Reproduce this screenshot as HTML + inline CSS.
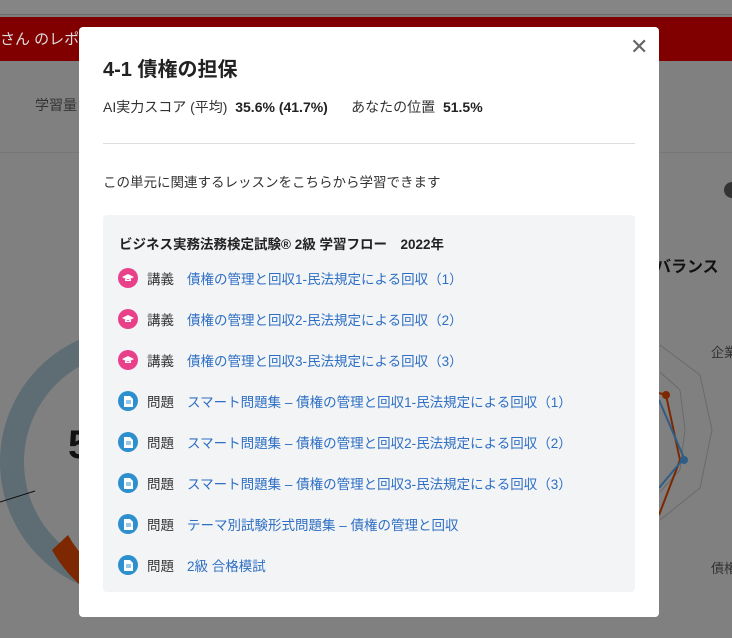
<!DOCTYPE html>
<html><head><meta charset="utf-8"><style>
*{margin:0;padding:0;box-sizing:border-box}
body{width:732px;height:638px;overflow:hidden;position:relative;background:#808080;font-family:"Liberation Sans","Noto Sans CJK JP",sans-serif;}
.bg{position:absolute;left:0;top:0;width:732px;height:638px}
.modal{position:absolute;left:79px;top:27px;width:580px;height:590px;background:#fff;border-radius:4px}
.close{position:absolute;left:551px;top:10px;font-size:22px;color:#666;line-height:20px;font-weight:300}
h1{position:absolute;left:24px;top:26px;font-size:20px;font-weight:bold;color:#222}
.score{position:absolute;left:24px;top:70px;font-size:14px;color:#333;white-space:nowrap}
.score b{font-weight:bold;color:#222}
.hr{position:absolute;left:24px;top:116px;width:532px;height:1px;background:#ddd}
.intro{position:absolute;left:24px;top:144px;font-size:13.5px;color:#333}
.panel{position:absolute;left:24px;top:188px;width:532px;height:377px;background:#f3f4f6;border-radius:4px}
.pt{position:absolute;left:16px;top:18px;font-size:13.5px;font-weight:bold;color:#222;white-space:nowrap}
.row{position:absolute;left:15px;height:20px;display:flex;align-items:center;font-size:13.5px;white-space:nowrap}
.ic{width:20px;height:20px;border-radius:50%;margin-right:9px;display:flex;align-items:center;justify-content:center}
.k{color:#333;width:40px}
.l{color:#2e6fc4}
</style></head><body>
<svg class="bg" width="732" height="638" viewBox="0 0 732 638">
<rect x="0" y="0" width="732" height="14" fill="#858585"/>
<rect x="0" y="14" width="732" height="1" fill="#6e6e6e"/>
<rect x="0" y="17" width="732" height="44" fill="#800000"/>
<text x="0" y="44" font-size="15" fill="#ddd" font-family="Liberation Sans,Noto Sans CJK JP,sans-serif">さん のレポ</text>
<text x="35" y="110" font-size="14" fill="#333" font-family="Liberation Sans,Noto Sans CJK JP,sans-serif">学習量</text>
<rect x="0" y="152" width="732" height="1" fill="#777"/>
<circle cx="134" cy="462" r="122" fill="none" stroke="#5e6d74" stroke-width="24"/>
<path d="M52 550 A134 134 0 0 0 80 585 L90 563 A110 110 0 0 1 68 535 Z" fill="#7d2800"/>
<line x1="0" y1="502" x2="35" y2="491" stroke="#111" stroke-width="1"/>
<text x="68" y="458" font-size="40" font-weight="bold" fill="#111">5</text>
<text x="655" y="272" font-size="16" font-weight="bold" fill="#111" font-family="Liberation Sans,Noto Sans CJK JP,sans-serif">バランス</text>
<text x="711" y="357" font-size="13" fill="#333" font-family="Liberation Sans,Noto Sans CJK JP,sans-serif">企業</text>
<text x="711" y="573" font-size="13" fill="#333" font-family="Liberation Sans,Noto Sans CJK JP,sans-serif">債権</text>
<polyline points="660,345 700,375 712,430 700,488 660,520" fill="none" stroke="#6a6a6a"/>
<polyline points="660,372 680,390 685,430 680,470 660,492" fill="none" stroke="#6a6a6a"/>
<polyline points="659,393 666,395 680,460 659,515" fill="none" stroke="#7d2800" stroke-width="2"/>
<circle cx="666" cy="395" r="4" fill="#7d2800"/>
<polyline points="659,400 684,458 659,488" fill="none" stroke="#2e5d86" stroke-width="2"/>
<circle cx="684" cy="460" r="4" fill="#2e5d86"/>
<circle cx="732" cy="190" r="8" fill="#333"/>
</svg>
<div class="modal">
<div class="close">✕</div>
<h1>4-1 債権の担保</h1>
<div class="score">AI実力スコア (平均) &nbsp;<b>35.6% (41.7%)</b>&nbsp;&nbsp;&nbsp;&nbsp;&nbsp; あなたの位置 &nbsp;<b>51.5%</b></div>
<div class="hr"></div>
<div class="intro">この単元に関連するレッスンをこちらから学習できます</div>
<div class="panel">
<div class="pt">ビジネス実務法務検定試験® 2級 学習フロー　2022年</div>
<div class="row" style="top:53px"><div class="ic" style="background:#e8418a"><svg width="12" height="8"><path d="M0 3L6 0L12 3L6 6Z M3 5v2h6v-2" fill="#fff"/></svg></div><span class="k">講義</span><span class="l">債権の管理と回収1-民法規定による回収（1）</span></div>
<div class="row" style="top:94px"><div class="ic" style="background:#e8418a"><svg width="12" height="8"><path d="M0 3L6 0L12 3L6 6Z M3 5v2h6v-2" fill="#fff"/></svg></div><span class="k">講義</span><span class="l">債権の管理と回収2-民法規定による回収（2）</span></div>
<div class="row" style="top:135px"><div class="ic" style="background:#e8418a"><svg width="12" height="8"><path d="M0 3L6 0L12 3L6 6Z M3 5v2h6v-2" fill="#fff"/></svg></div><span class="k">講義</span><span class="l">債権の管理と回収3-民法規定による回収（3）</span></div>
<div class="row" style="top:176px"><div class="ic" style="background:#2d8fce"><svg width="9" height="11"><path d="M0 0h6l3 3v8h-9z" fill="#fff"/><path d="M2 5h5M2 7h5" stroke="#2d8fce"/></svg></div><span class="k">問題</span><span class="l">スマート問題集 – 債権の管理と回収1-民法規定による回収（1）</span></div>
<div class="row" style="top:217px"><div class="ic" style="background:#2d8fce"><svg width="9" height="11"><path d="M0 0h6l3 3v8h-9z" fill="#fff"/><path d="M2 5h5M2 7h5" stroke="#2d8fce"/></svg></div><span class="k">問題</span><span class="l">スマート問題集 – 債権の管理と回収2-民法規定による回収（2）</span></div>
<div class="row" style="top:258px"><div class="ic" style="background:#2d8fce"><svg width="9" height="11"><path d="M0 0h6l3 3v8h-9z" fill="#fff"/><path d="M2 5h5M2 7h5" stroke="#2d8fce"/></svg></div><span class="k">問題</span><span class="l">スマート問題集 – 債権の管理と回収3-民法規定による回収（3）</span></div>
<div class="row" style="top:299px"><div class="ic" style="background:#2d8fce"><svg width="9" height="11"><path d="M0 0h6l3 3v8h-9z" fill="#fff"/><path d="M2 5h5M2 7h5" stroke="#2d8fce"/></svg></div><span class="k">問題</span><span class="l">テーマ別試験形式問題集 – 債権の管理と回収</span></div>
<div class="row" style="top:340px"><div class="ic" style="background:#2d8fce"><svg width="9" height="11"><path d="M0 0h6l3 3v8h-9z" fill="#fff"/><path d="M2 5h5M2 7h5" stroke="#2d8fce"/></svg></div><span class="k">問題</span><span class="l">2級 合格模試</span></div>
</div>
</div>
</body></html>
